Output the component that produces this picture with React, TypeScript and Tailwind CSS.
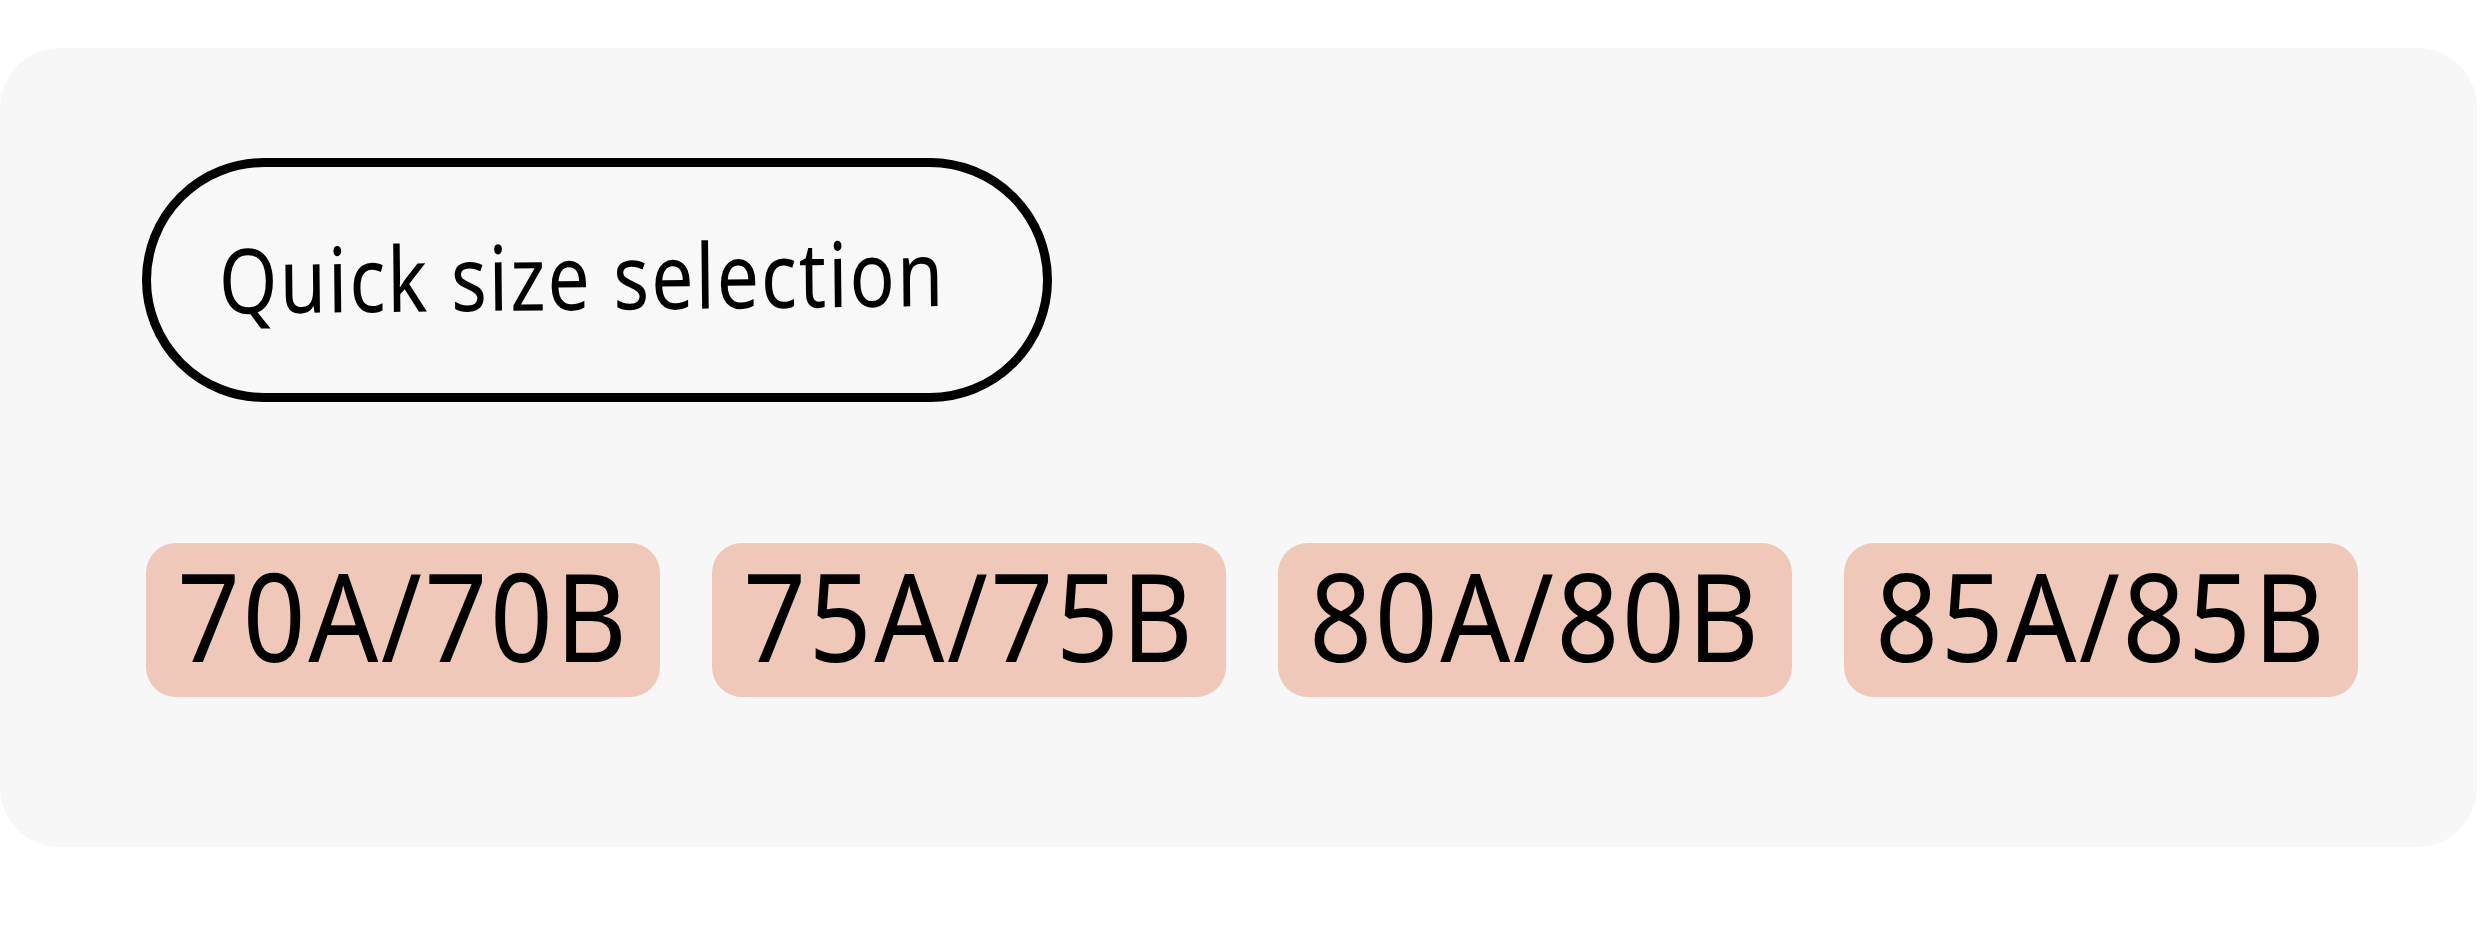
export default function App() {
  const sizes = ["70A/70B", "75A/75B", "80A/80B", "85A/85B"];
  return (
    <div className="w-[2480px] h-[940px] bg-white pt-[48px] overflow-hidden" style={{ fontFamily: '"Noto Sans", "Open Sans", sans-serif' }}>
      <div className="w-[2477px] h-[799px] bg-[#f7f7f7] rounded-[60px] pl-[142px] pt-[110px] flex flex-col">
        <div className="self-start h-[244px] w-[910px] rounded-full border-[9px] border-black bg-[#f8f8f8] flex items-center pl-[68px]">
          <span className="block text-[75px] leading-none text-black tracking-[2px] origin-left scale-y-[1.2] rotate-[-0.6deg] -mt-[2px]">Quick size selection</span>
        </div>
        <div className="flex gap-[52px] mt-[141px] ml-[4px]">
          {sizes.map((s) => (
            <div key={s} className="w-[514px] h-[154px] rounded-[30px] bg-[#efc8ba] flex items-center justify-center">
              <span className="block text-[122px] leading-none text-black font-normal tracking-[3px] scale-x-[0.9] -mt-[10px]">{s}</span>
            </div>
          ))}
        </div>
      </div>
    </div>
  );
}
